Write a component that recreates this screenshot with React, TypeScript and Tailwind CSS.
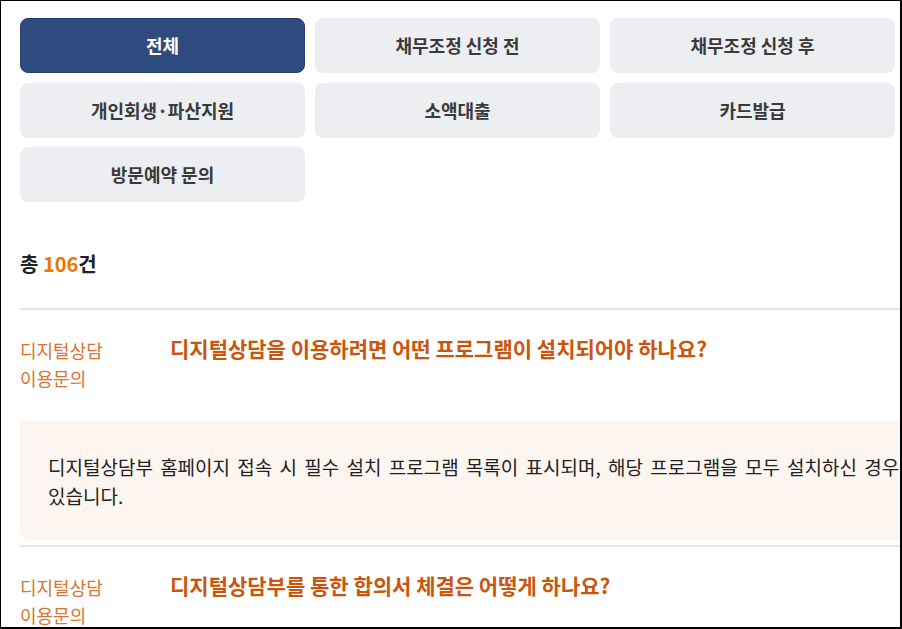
const tabs = [
  '전체',
  '채무조정 신청 전',
  '채무조정 신청 후',
  '개인회생 상담',
  '개인회생·파산지원',
  '소액대출',
  '카드발급',
  '신용관리교육',
  '방문예약 문의',
]

const faqs = [
  {
    category: ['디지털상담', '이용문의'],
    question: '디지털상담을 이용하려면 어떤 프로그램이 설치되어야 하나요?',
    answer: [
      '디지털상담부 홈페이지 접속 시 필수 설치 프로그램 목록이 표시되며, 해당 프로그램을 모두 설치하신 경우 디지털상담 서비스를 이용하실 수',
      '있습니다.',
    ],
  },
  {
    category: ['디지털상담', '이용문의'],
    question: '디지털상담부를 통한 합의서 체결은 어떻게 하나요?',
  },
]

function FaqItem({ item }: { item: (typeof faqs)[number] }) {
  return (
    <div>
      <div className="h-[2px] bg-[#e6e6e8]" />
      <div className="flex pt-[26px] pb-[29px]">
        <div className="w-[150px] shrink-0 text-[18px] leading-[28px] text-[#d8752f]">
          {item.category.map((c) => (
            <p key={c}>{c}</p>
          ))}
        </div>
        <p className="text-[21px] leading-[24px] font-bold text-[#c9560c]">{item.question}</p>
      </div>
      {item.answer && (
        <div className="bg-[#fdf5f0] rounded-bl-[10px] pl-[28px] pt-[31px] pb-[30px] mb-[5px] text-[19px] leading-[29px] text-[#222] [word-spacing:3px]">
          {item.answer.map((line) => (
            <p key={line} className="whitespace-nowrap">{line}</p>
          ))}
        </div>
      )}
    </div>
  )
}

export default function App() {
  return (
    <div
      className="w-[902px] h-[629px] overflow-hidden bg-white border-l border-t border-r-2 border-b-2 border-black"
      style={{ fontFamily: '"Noto Sans CJK KR", "Noto Sans", sans-serif' }}
    >
      <div className="w-[1170px] pl-[19px] pt-[17px]">
        {/* Category tabs */}
        <div className="grid grid-cols-[repeat(4,285px)] gap-x-[10px] gap-y-[9.5px]">
          {tabs.map((t, i) => (
            <button
              key={t}
              className={
                i === 0
                  ? 'h-[55px] rounded-[8px] bg-[#2f4b80] border border-[#27406e] text-white text-[18px] font-bold'
                  : 'h-[55px] rounded-[8px] bg-[#eceef2] text-[#3a3a3a] text-[18px] font-bold'
              }
            >
              {t}
            </button>
          ))}
        </div>

        {/* Total count */}
        <p className="mt-[48px] mb-[30px] text-[20px] leading-[28px] font-bold text-[#222]">
          총 <span className="text-[#f07400]">106</span>건
        </p>

        {faqs.map((f) => (
          <FaqItem key={f.question} item={f} />
        ))}
      </div>
    </div>
  )
}
